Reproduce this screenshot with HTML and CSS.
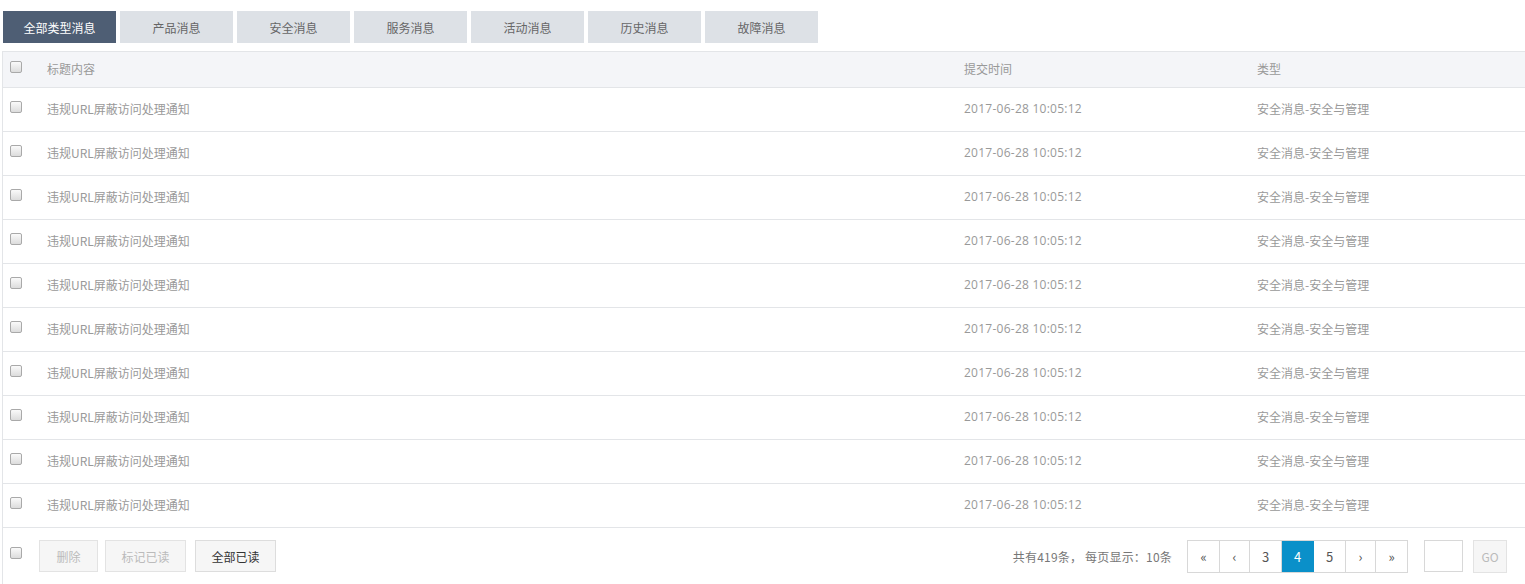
FILE: index.html
```html
<!DOCTYPE html>
<html lang="zh-CN">
<head>
  <meta charset="UTF-8">
  <title>消息中心</title>
  <link rel="stylesheet" href="styles.css">
</head>
<body>
  <div class="tabs">
    <a class="tab active">全部类型消息</a>
    <a class="tab">产品消息</a>
    <a class="tab">安全消息</a>
    <a class="tab">服务消息</a>
    <a class="tab">活动消息</a>
    <a class="tab">历史消息</a>
    <a class="tab">故障消息</a>
  </div>

  <div class="table">
    <div class="row head">
      <div class="cell"><span class="check"></span></div>
      <div class="cell">标题内容</div>
      <div class="cell">提交时间</div>
      <div class="cell">类型</div>
    </div>
    <div class="row"><div class="cell"><span class="check"></span></div><div class="cell">违规URL屏蔽访问处理通知</div><div class="cell time">2017-06-28 10:05:12</div><div class="cell">安全消息-安全与管理</div></div>
    <div class="row"><div class="cell"><span class="check"></span></div><div class="cell">违规URL屏蔽访问处理通知</div><div class="cell time">2017-06-28 10:05:12</div><div class="cell">安全消息-安全与管理</div></div>
    <div class="row"><div class="cell"><span class="check"></span></div><div class="cell">违规URL屏蔽访问处理通知</div><div class="cell time">2017-06-28 10:05:12</div><div class="cell">安全消息-安全与管理</div></div>
    <div class="row"><div class="cell"><span class="check"></span></div><div class="cell">违规URL屏蔽访问处理通知</div><div class="cell time">2017-06-28 10:05:12</div><div class="cell">安全消息-安全与管理</div></div>
    <div class="row"><div class="cell"><span class="check"></span></div><div class="cell">违规URL屏蔽访问处理通知</div><div class="cell time">2017-06-28 10:05:12</div><div class="cell">安全消息-安全与管理</div></div>
    <div class="row"><div class="cell"><span class="check"></span></div><div class="cell">违规URL屏蔽访问处理通知</div><div class="cell time">2017-06-28 10:05:12</div><div class="cell">安全消息-安全与管理</div></div>
    <div class="row"><div class="cell"><span class="check"></span></div><div class="cell">违规URL屏蔽访问处理通知</div><div class="cell time">2017-06-28 10:05:12</div><div class="cell">安全消息-安全与管理</div></div>
    <div class="row"><div class="cell"><span class="check"></span></div><div class="cell">违规URL屏蔽访问处理通知</div><div class="cell time">2017-06-28 10:05:12</div><div class="cell">安全消息-安全与管理</div></div>
    <div class="row"><div class="cell"><span class="check"></span></div><div class="cell">违规URL屏蔽访问处理通知</div><div class="cell time">2017-06-28 10:05:12</div><div class="cell">安全消息-安全与管理</div></div>
    <div class="row"><div class="cell"><span class="check"></span></div><div class="cell">违规URL屏蔽访问处理通知</div><div class="cell time">2017-06-28 10:05:12</div><div class="cell">安全消息-安全与管理</div></div>

    <div class="footer">
      <div class="actions">
        <span class="check"></span>
        <button class="btn disabled btn-sm">删除</button>
        <button class="btn disabled">标记已读</button>
        <button class="btn">全部已读</button>
      </div>
      <div class="pager">
        <span class="total">共有419条， 每页显示：10条</span>
        <div class="pages">
          <a class="page">«</a>
          <a class="page narrow">‹</a>
          <a class="page">3</a>
          <a class="page current">4</a>
          <a class="page">5</a>
          <a class="page narrow">›</a>
          <a class="page">»</a>
        </div>
        <input class="jump" type="text">
        <button class="go">GO</button>
      </div>
    </div>
  </div>
</body>
</html>
```

FILE: styles.css
```css
body {
  margin: 0;
  font-family: "Noto Sans CJK SC", "Noto Sans", sans-serif;
  font-size: 12px;
  color: #999;
  background: #fff;
  overflow: hidden;
}

.tabs {
  display: flex;
  gap: 4px;
  padding: 11px 0 0 3px;
  height: 32px;
}

.tab {
  width: 113px;
  height: 32px;
  line-height: 33px;
  text-align: center;
  background: #dde1e6;
  color: #666;
  cursor: pointer;
}

.tab.active {
  background: #4e5e74;
  color: #fff;
}

.table {
  margin: 8px 0 0 2px;
  border-left: 1px solid #e3e5e8;
  border-top: 1px solid #e3e5e8;
  width: 1540px;
}

.row {
  display: grid;
  grid-template-columns: 44px 917px 293px 1fr;
  height: 43px;
  border-bottom: 1px solid #e3e5e8;
  align-items: center;
}

.row .cell {
  margin-top: -2px;
}

.row.head {
  height: 35px;
  background: #f4f5f8;
}

.cell:first-child {
  padding-left: 7px;
  display: flex;
}

.time {
  font-family: "Open Sans", "Noto Sans CJK SC", sans-serif;
  letter-spacing: 0.25px;
}

.check {
  display: inline-block;
  width: 10px;
  height: 10px;
  border: 1px solid #a9a9a9;
  border-radius: 2px;
  background: linear-gradient(#fafafa, #dcdcdc);
  margin-top: -4px;
}

.footer {
  display: flex;
  justify-content: space-between;
  align-items: center;
  height: 56px;
  width: 1523px;
}

.actions {
  display: flex;
  align-items: center;
  padding-left: 7px;
}

.actions .check {
  margin: -6px 18px 0 0;
}

.btn {
  height: 32px;
  width: 81px;
  margin-right: 7px;
  border: 1px solid #ddd;
  background: #f6f6f6;
  color: #333;
  font-family: inherit;
  font-size: 12px;
  padding: 0;
}

.btn.btn-sm {
  width: 59px;
  margin-left: -1px;
}

.btn.disabled {
  color: #bbb;
  border-color: #e3e3e3;
}

.btn:last-child {
  margin-left: 2px;
}

.pager {
  display: flex;
  align-items: center;
}

.total {
  margin-right: 15px;
  color: #777;
  letter-spacing: 0.2px;
}

.pages {
  display: flex;
  border: 1px solid #d8d8d8;
  border-right: none;
}

.page {
  width: 31px;
  height: 31px;
  line-height: 31px;
  text-align: center;
  border-right: 1px solid #d8d8d8;
  color: #555;
  font-size: 13px;
}

.page.narrow {
  width: 29px;
}

.page.current {
  background: #0a90c9;
  color: #fff;
  border-color: #0a90c9;
}

.jump {
  width: 37px;
  height: 30px;
  margin-left: 16px;
  border: 1px solid #d8d8d8;
  padding: 0;
}

.go {
  width: 34px;
  height: 33px;
  margin-left: 10px;
  margin-right: 19px;
  border: 1px solid #e3e3e3;
  background: #f6f6f6;
  color: #bbb;
  font-family: inherit;
  font-size: 12px;
  padding: 0;
}
```
